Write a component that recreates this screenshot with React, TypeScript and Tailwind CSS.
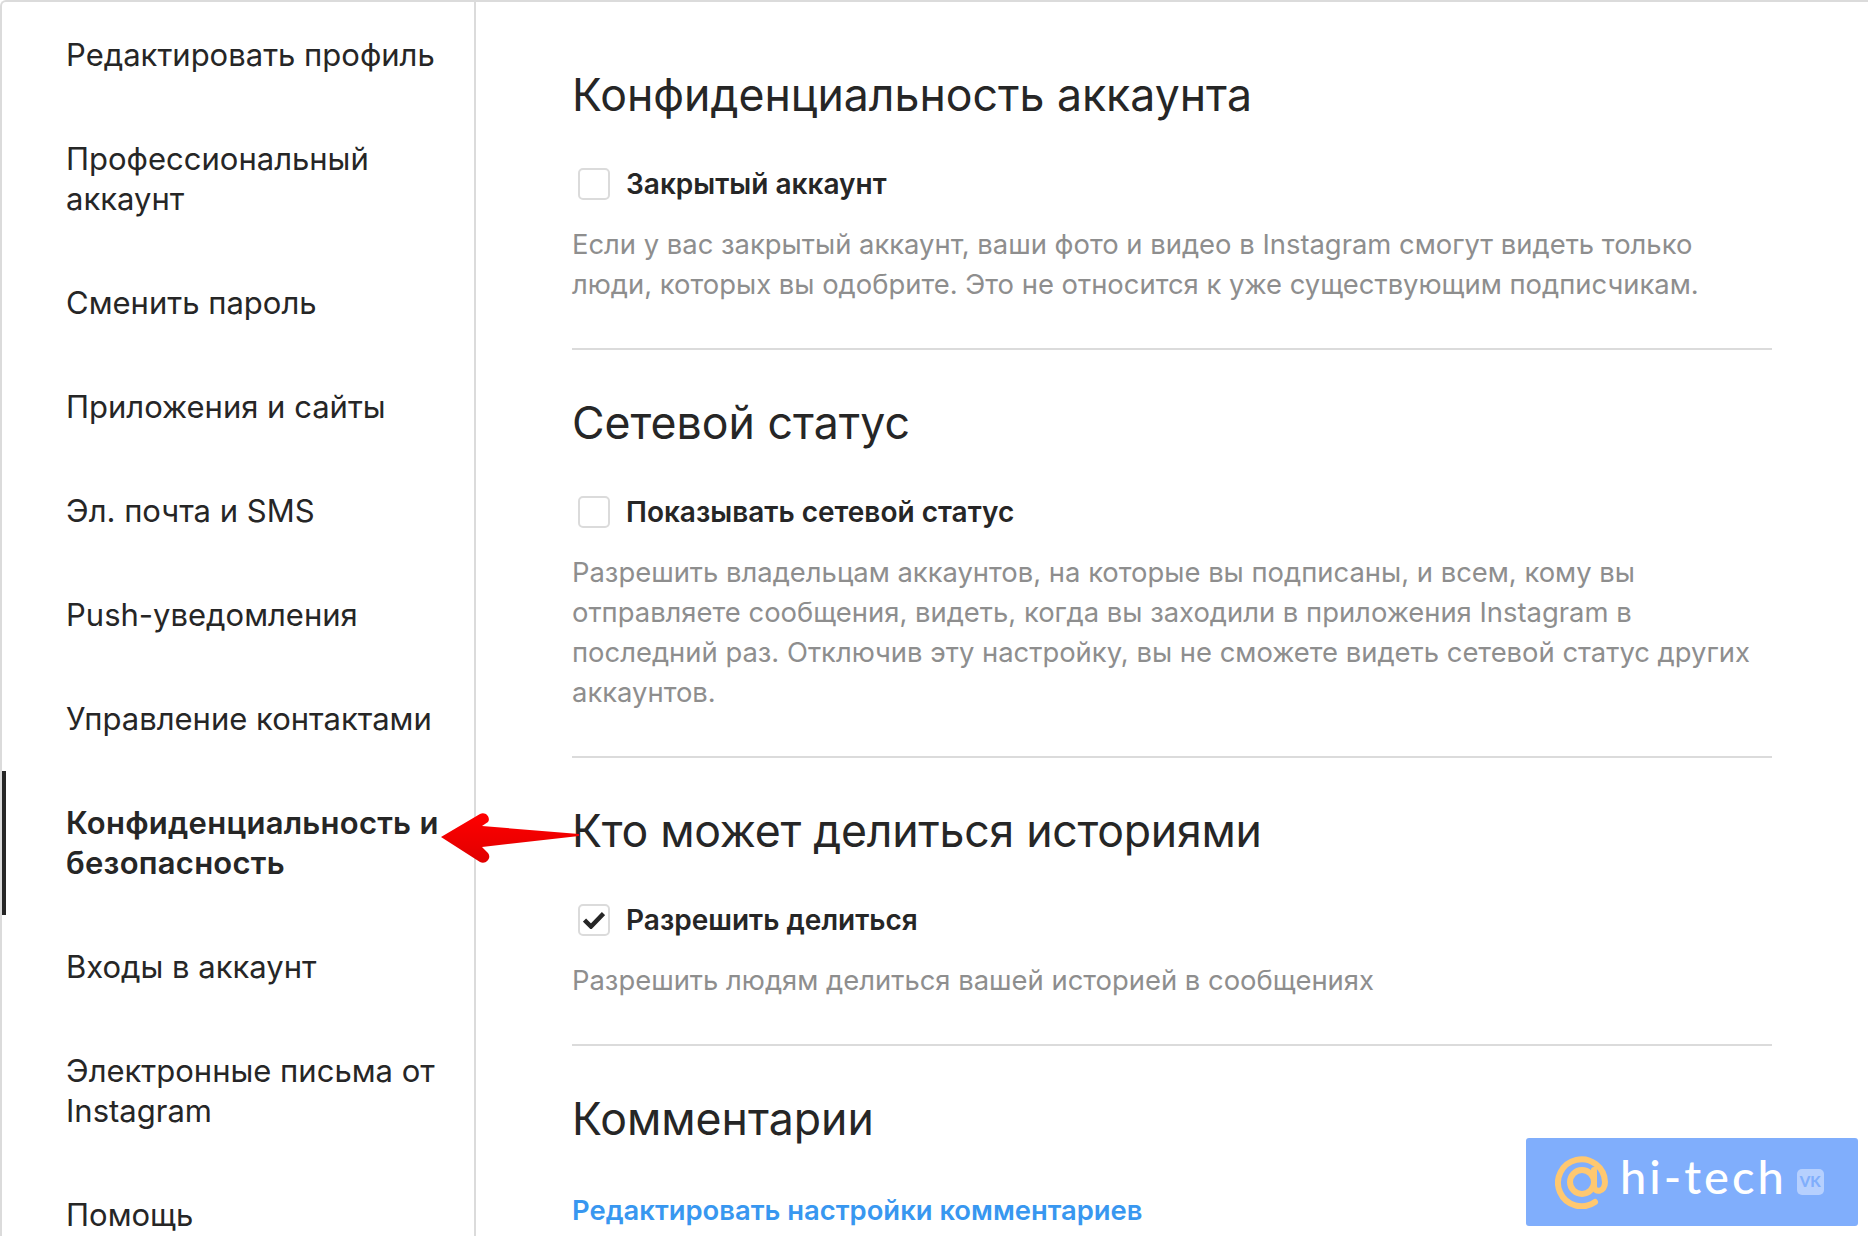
const navItems = [
  { label: "Редактировать профиль" },
  { label: "Профессиональный аккаунт" },
  { label: "Сменить пароль" },
  { label: "Приложения и сайты" },
  { label: "Эл. почта и SMS" },
  { label: "Push-уведомления" },
  { label: "Управление контактами" },
  { label: "Конфиденциальность и безопасность", active: true },
  { label: "Входы в аккаунт" },
  { label: "Электронные письма от Instagram" },
  { label: "Помощь" },
];

const sections = [
  {
    title: "Конфиденциальность аккаунта",
    titleClass: "text-[44.6px] font-normal leading-[54px]",
    option: "Закрытый аккаунт",
    checked: false,
    text: "Если у вас закрытый аккаунт, ваши фото и видео в Instagram смогут видеть только люди, которых вы одобрите. Это не относится к уже существующим подписчикам.",
  },
  {
    title: "Сетевой статус",
    titleClass: "text-[44.6px] font-normal leading-[54px]",
    option: "Показывать сетевой статус",
    checked: false,
    text: "Разрешить владельцам аккаунтов, на которые вы подписаны, и всем, кому вы отправляете сообщения, видеть, когда вы заходили в приложения Instagram в последний раз. Отключив эту настройку, вы не сможете видеть сетевой статус других аккаунтов.",
  },
  {
    title: "Кто может делиться историями",
    titleClass: "text-[44.6px] font-normal leading-[54px] tracking-[-0.25px]",
    option: "Разрешить делиться",
    checked: true,
    text: "Разрешить людям делиться вашей историей в сообщениях",
  },
];

const Checkbox = ({ checked }: { checked: boolean }) => (
  <span className="ml-[6px] flex h-[32px] w-[32px] items-center justify-center rounded-[5px] border-2 border-[#dbdbdb] bg-white">
    {checked && (
      <svg width="22" height="18" viewBox="0 0 22 18" fill="none">
        <path d="M1.5 9 L8 15.5 L20.5 2.5" stroke="#262626" strokeWidth="4.5" />
      </svg>
    )}
  </span>
);

const Arrow = () => (
  <svg className="absolute left-[436px] top-[808px]" width="145" height="58" viewBox="0 0 145 58">
    <defs>
      <linearGradient id="arrowFill" x1="0" y1="0" x2="0" y2="1">
        <stop offset="0" stopColor="#ff0000" />
        <stop offset="1" stopColor="#e00000" />
      </linearGradient>
    </defs>
    <path
      d="M5 29 L44 6 C50 3 55 10 52 14 L46 18 L143 26 L143 28 L46 39 L52 45 C56 50 50 57 44 54 Z"
      fill="url(#arrowFill)"
    />
  </svg>
);

const Watermark = () => (
  <div className="absolute left-[1526px] top-[1138px] flex h-[88px] w-[332px] items-center rounded-[3px] bg-[#80aefc] pl-[29px]">
    <svg width="54" height="54" viewBox="0 0 54 54" fill="none" stroke="#ffc870" strokeWidth="6">
      <circle cx="27" cy="27" r="12" />
      <path d="M39 15 V31 C39 38 50 38 50 27 A23.5 23.5 0 1 0 40 47" strokeLinecap="round" />
    </svg>
    <span className="mb-[11px] ml-[11px] font-['Lato',sans-serif] text-[47px] font-medium leading-none tracking-[3px] text-white">
      hi-tech
    </span>
    <span className="mb-[1px] ml-[10px] flex h-[26px] w-[27px] items-center justify-center rounded-[5px] bg-[#b6d0fe] font-['Lato',sans-serif] text-[15px] font-black text-[#80aefc]">
      VK
    </span>
  </div>
);

export default function App() {
  return (
    <div className="relative h-[1236px] w-[1868px] overflow-hidden bg-white font-['Inter',sans-serif] text-[#262626]">
      <div className="flex h-[1300px] rounded-tl-[6px] border-l-2 border-t-2 border-[#dbdbdb]">
        <nav className="w-[474px] shrink-0 border-r-2 border-[#dbdbdb] pt-px">
          {navItems.map((item) => (
            <div
              key={item.label}
              className={
                item.active
                  ? "border-l-4 border-[#262626] py-[32px] pl-[60px] pr-[20px] text-[31px] font-semibold leading-[40px] tracking-[0.25px]"
                  : "border-l-4 border-transparent py-[32px] pl-[60px] pr-[20px] text-[31px] leading-[40px]"
              }
            >
              {item.label}
            </div>
          ))}
        </nav>
        <main className="w-[1296px] pl-[96px] pt-[66px]">
          {sections.map((section) => (
            <section key={section.title} className="mb-[46px] border-b-2 border-[#dbdbdb] pb-[44px]">
              <h2 className={section.titleClass}>{section.title}</h2>
              <label className="mt-[46px] flex items-center gap-[16px] text-[28px] font-semibold leading-[32px]">
                <Checkbox checked={section.checked} />
                {section.option}
              </label>
              <p className="mt-[24px] text-[27.4px] leading-[40px] text-[#8e8e8e]">{section.text}</p>
            </section>
          ))}
          <h2 className="text-[44.6px] font-normal leading-[54px]">Комментарии</h2>
          <a className="mt-[44px] block text-[27.4px] font-semibold leading-[40px] text-[#3897f0]">
            Редактировать настройки комментариев
          </a>
        </main>
      </div>
      <Arrow />
      <Watermark />
    </div>
  );
}
